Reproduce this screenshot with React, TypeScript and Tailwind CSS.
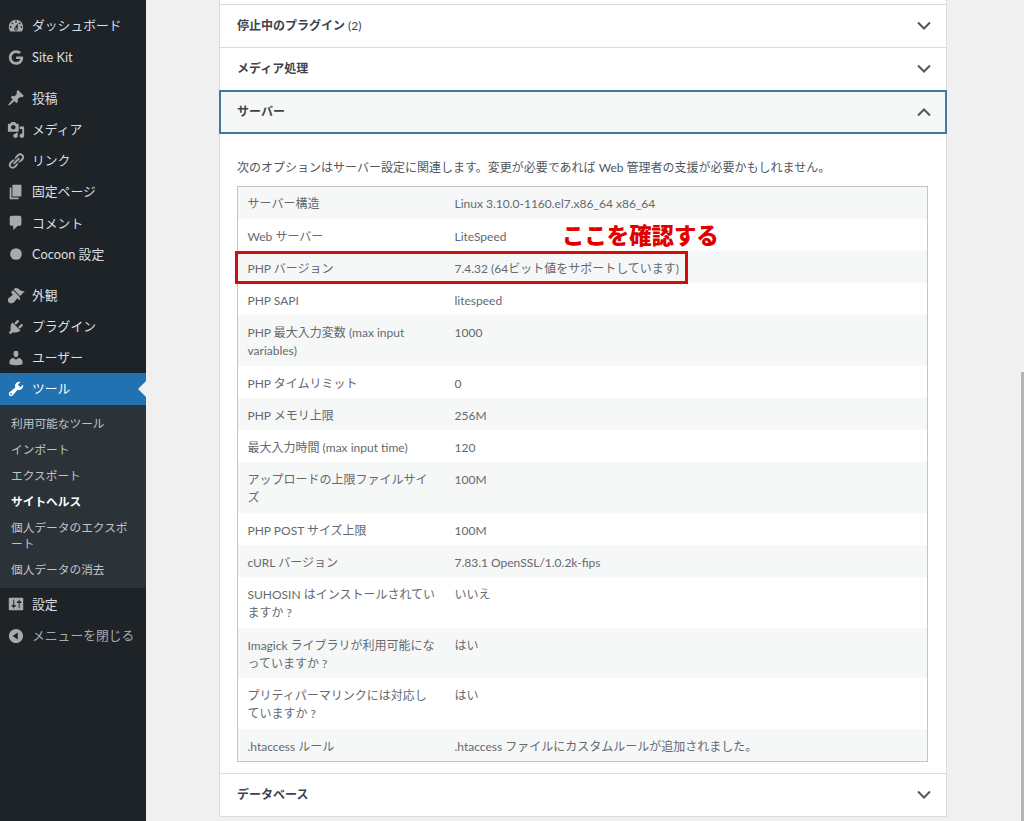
import { FaGoogle } from "react-icons/fa";

const dashicons: Record<string, string> = {
  dashboard:
    "M3.76 16h12.48c1.1-1.2 1.76-2.9 1.76-5 0-4.4-3.6-8-8-8s-8 3.6-8 8c0 2.1.66 3.8 1.76 5zM10 4c.55 0 1 .45 1 1s-.45 1-1 1-1-.45-1-1 .45-1 1-1zM6 6c.55 0 1 .45 1 1s-.45 1-1 1-1-.45-1-1 .45-1 1-1zm8 0c.55 0 1 .45 1 1s-.45 1-1 1-1-.45-1-1 .45-1 1-1zm-5.37 5.55L12 7v6c0 1.1-.9 2-2 2s-2-.9-2-2c0-.57.24-1.08.63-1.45zM4 10c.55 0 1 .45 1 1s-.45 1-1 1-1-.45-1-1 .45-1 1-1zm12 0c.55 0 1 .45 1 1s-.45 1-1 1-1-.45-1-1 .45-1 1-1zm-5 3c0-.55-.45-1-1-1s-1 .45-1 1 .45 1 1 1 1-.45 1-1z",
  pin: "M10.44 3.02l1.82-1.82 6.36 6.35-1.83 1.82c-1.05-.68-2.48-.57-3.41.36l-.75.75c-.92.93-1.04 2.35-.35 3.41l-1.83 1.82-2.41-2.41-2.8 2.79c-.42.42-3.38 2.71-3.8 2.29s1.86-3.39 2.28-3.81l2.79-2.79L4.1 9.36l1.83-1.82c1.05.69 2.48.57 3.4-.36l.75-.75c.93-.92 1.05-2.35.36-3.41z",
  media:
    "M13 11V4c0-.55-.45-1-1-1h-1.67L9 1H5L3.67 3H2c-.55 0-1 .45-1 1v7c0 .55.45 1 1 1h10c.55 0 1-.45 1-1zM7 4.5c1.38 0 2.5 1.12 2.5 2.5S8.38 9.5 7 9.5 4.5 8.38 4.5 7 5.62 4.5 7 4.5zM14 6h5v10.5c0 1.38-1.12 2.5-2.5 2.5S14 17.88 14 16.5s1.12-2.5 2.5-2.5c.17 0 .34.02.5.05V9h-3V6zm-4 8.05V13h2v3.5c0 1.38-1.12 2.5-2.5 2.5S7 17.88 7 16.5 8.12 14 9.5 14c.17 0 .34.02.5.05z",
  link: "M17.74 2.76c1.68 1.69 1.68 4.41 0 6.1l-1.53 1.52c-1.12 1.12-2.7 1.47-4.14 1.09l2.62-2.61.76-.77.76-.76c.84-.84.84-2.2 0-3.04-.84-.85-2.2-.85-3.04 0l-.77.76-3.38 3.38c-.37-1.44-.02-3.02 1.1-4.14l1.52-1.53c1.69-1.68 4.42-1.68 6.1 0zM8.59 13.43l5.34-5.34c.42-.42.42-1.1 0-1.52-.44-.43-1.13-.39-1.53 0l-5.33 5.34c-.42.42-.42 1.1 0 1.52.44.43 1.13.39 1.52 0zm-.76 2.29l4.14-4.15c.38 1.44.03 3.02-1.09 4.14l-1.52 1.53c-1.69 1.68-4.41 1.68-6.1 0-1.68-1.68-1.68-4.42 0-6.1l1.53-1.52c1.12-1.12 2.7-1.47 4.14-1.1l-4.14 4.15c-.85.84-.85 2.2 0 3.05.84.84 2.2.84 3.04 0z",
  page: "M6 15V2h10v13H6zm-1 1h8v2H3V5h2v11z",
  comment: "M5 2h9c1.1 0 2 .9 2 2v7c0 1.1-.9 2-2 2h-2l-5 5v-5H5c-1.1 0-2-.9-2-2V4c0-1.1.9-2 2-2z",
  brush:
    "M14.48 11.06L7.41 3.99l1.5-1.5c.5-.56 2.3-.47 3.51.32 1.21.8 1.43 1.28 2.91 2.1 1.18.64 2.45 1.26 4.45.85zm-.71.71L6.7 4.7 4.93 6.47c-.39.39-.39 1.02 0 1.41l1.06 1.06c.39.39.39 1.03 0 1.42-.6.6-1.43 1.11-2.21 1.69-.35.26-.7.53-1.01.84C1.43 13.23 1 14.8 1 15.71s.35 1.81 1.05 2.5c.7.7 1.59 1.05 2.5 1.05s2.48-.43 3.8-1.76c.31-.31.58-.66.85-1.02.57-.78 1.08-1.6 1.69-2.21.39-.39 1.02-.39 1.41 0l1.06 1.06c.39.39 1.02.39 1.41 0z",
  plugin:
    "M13.11 4.36L9.87 7.6 8 5.73l3.24-3.24c.35-.34 1.05-.2 1.56.32.52.51.66 1.21.31 1.55zm-8 1.77l.91-1.12 9.01 9.01-1.19.84c-.71.71-2.63 1.16-3.82 1.16H6.14L4.9 17.26c-.59.59-1.54.59-2.12 0-.59-.58-.59-1.53 0-2.12l1.24-1.24v-3.88c0-1.13.4-3.19 1.09-3.89zm7.26 3.97l3.24-3.24c.34-.35 1.04-.21 1.55.31.52.51.66 1.21.31 1.55l-3.24 3.25z",
  user: "M10 9.25c-2.27 0-2.73-3.44-2.73-3.44C7 4.02 7.82 2 9.97 2c2.16 0 2.98 2.02 2.71 3.81 0 0-.41 3.44-2.68 3.44zm0 2.57L12.72 10c2.39 0 4.52 2.33 4.52 4.53v2.49s-3.65 1.13-7.24 1.13c-3.65 0-7.24-1.13-7.24-1.13v-2.49c0-2.25 1.94-4.48 4.47-4.48z",
  tools:
    "M16.68 9.77c-1.34 1.34-3.3 1.67-4.95.99l-5.41 6.52c-.99.99-2.59.99-3.58 0s-.99-2.59 0-3.57l6.52-5.42c-.68-1.65-.35-3.61.99-4.95 1.28-1.28 3.12-1.62 4.72-1.06l-2.89 2.89 2.82 2.82 2.86-2.87c.53 1.58.18 3.39-1.08 4.65zM3.81 16.21c.4.39 1.04.39 1.43 0 .4-.4.4-1.04 0-1.43-.39-.4-1.03-.4-1.43 0-.39.39-.39 1.03 0 1.43z",
  settings:
    "M18 16V4c0-.55-.45-1-1-1H3c-.55 0-1 .45-1 1v12c0 .55.45 1 1 1h14c.55 0 1-.45 1-1zM8 11h1c.55 0 1 .45 1 1s-.45 1-1 1H8v1.5c0 .28-.22.5-.5.5s-.5-.22-.5-.5V13H6c-.55 0-1-.45-1-1s.45-1 1-1h1V5.5c0-.28.22-.5.5-.5s.5.22.5.5V11zm5-2h-1c-.55 0-1-.45-1-1s.45-1 1-1h1V5.5c0-.28.22-.5.5-.5s.5.22.5.5V7h1c.55 0 1 .45 1 1s-.45 1-1 1h-1v5.5c0 .28-.22.5-.5.5s-.5-.22-.5-.5V9z",
  collapse:
    "M10 2.16c4.33 0 7.84 3.51 7.84 7.84s-3.51 7.84-7.84 7.84S2.16 14.33 2.16 10 5.71 2.16 10 2.16zm2 11.72V6.12L6.18 9.97z",
  circle: "M10 3.5a6.5 6.5 0 1 0 0 13a6.5 6.5 0 1 0 0-13z",
};

const menuTop = [
  { icon: "dashboard", label: "ダッシュボード" },
  { icon: "google", label: "Site Kit" },
];
const menuContent = [
  { icon: "pin", label: "投稿" },
  { icon: "media", label: "メディア" },
  { icon: "link", label: "リンク" },
  { icon: "page", label: "固定ページ" },
  { icon: "comment", label: "コメント" },
  { icon: "circle", label: "Cocoon 設定" },
];
const menuAdmin = [
  { icon: "brush", label: "外観" },
  { icon: "plugin", label: "プラグイン" },
  { icon: "user", label: "ユーザー" },
];
const toolLinks = ["利用可能なツール", "インポート", "エクスポート", "サイトヘルス", "個人データのエクスポート", "個人データの消去"];

const serverRows = [
  ["サーバー構造", "Linux 3.10.0-1160.el7.x86_64 x86_64"],
  ["Web サーバー", "LiteSpeed"],
  ["PHP バージョン", "7.4.32 (64ビット値をサポートしています)"],
  ["PHP SAPI", "litespeed"],
  ["PHP 最大入力変数 (max input variables)", "1000"],
  ["PHP タイムリミット", "0"],
  ["PHP メモリ上限", "256M"],
  ["最大入力時間 (max input time)", "120"],
  ["アップロードの上限ファイルサイズ", "100M"],
  ["PHP POST サイズ上限", "100M"],
  ["cURL バージョン", "7.83.1 OpenSSL/1.0.2k-fips"],
  ["SUHOSIN はインストールされていますか ?", "いいえ"],
  ["Imagick ライブラリが利用可能になっていますか ?", "はい"],
  ["プリティパーマリンクには対応していますか ?", "はい"],
  [".htaccess ルール", ".htaccess ファイルにカスタムルールが追加されました。"],
];

function MenuIcon({ name }: { name: string }) {
  if (name === "google") return <FaGoogle className="h-[15px] w-[18px]" />;
  return (
    <svg viewBox="0 0 20 20" className="h-[18px] w-[18px]" fill="currentColor" fillRule="evenodd">
      <path d={dashicons[name]} />
    </svg>
  );
}

function MenuRow({ icon, label }: { icon: string; label: string }) {
  return (
    <div className="flex h-[31.2px] items-center gap-[7px] pl-[7px] text-[12.8px] text-[#dcdfe1]">
      <span className="text-[#a7aaad]">
        <MenuIcon name={icon} />
      </span>
      <span>{label}</span>
    </div>
  );
}

function Chevron({ up = false }: { up?: boolean }) {
  return (
    <svg viewBox="0 0 16 10" className="h-[10px] w-[16px] text-[#50575e]" fill="none" stroke="currentColor" strokeWidth="2">
      <path d={up ? "M2 8.5l6-6 6 6" : "M2 1.5l6 6 6-6"} />
    </svg>
  );
}

function AccordionHead({ title, count }: { title: string; count?: string }) {
  return (
    <div className="flex h-[43px] items-center justify-between border-b border-[#dcdcde] bg-white pl-[17px] pr-[14px]">
      <span className="text-[12px] font-bold text-[#3c434a]">
        {title}
        {count ? <span className="font-normal"> {count}</span> : null}
      </span>
      <Chevron />
    </div>
  );
}

export default function App() {
  return (
    <div className="relative flex h-[821px] w-[1024px] overflow-hidden bg-[#f0f0f1] font-['Lato','Noto_Sans_CJK_JP',sans-serif]">
      <aside className="w-[146px] shrink-0 bg-[#1d2327] pt-[10.4px]">
        {menuTop.map((m) => (
          <MenuRow key={m.label} {...m} />
        ))}
        <div className="h-[10px]" />
        {menuContent.map((m) => (
          <MenuRow key={m.label} {...m} />
        ))}
        <div className="h-[10px]" />
        {menuAdmin.map((m) => (
          <MenuRow key={m.label} {...m} />
        ))}
        <div className="relative flex h-[31.2px] items-center gap-[7px] bg-[#2271b1] pl-[7px] text-[12.8px] text-white">
          <MenuIcon name="tools" />
          <span>ツール</span>
          <span className="absolute right-0 top-1/2 h-0 w-0 -translate-y-1/2 border-y-[8px] border-r-[8px] border-y-transparent border-r-[#f0f0f1]" />
        </div>
        <div className="bg-[#2c3338] pb-[6px] pt-[5.6px] text-[11.7px] leading-[16px] text-[#c3c4c7]">
          {toolLinks.map((t) => (
            <div key={t} className={t === "サイトヘルス" ? "py-[5px] pl-[11px] pr-[12px] font-bold text-white" : "py-[5px] pl-[11px] pr-[12px]"}>
              {t}
            </div>
          ))}
        </div>
        <div className="pt-[0.6px]">
          <MenuRow icon="settings" label="設定" />
          <div className="flex h-[31.2px] items-center gap-[7px] pl-[7px] text-[12.8px] text-[#a7aaad]">
            <MenuIcon name="collapse" />
            <span>メニューを閉じる</span>
          </div>
        </div>
      </aside>

      <main className="ml-[73px] w-[727.5px] shrink-0">
        <div className="border-x border-[#dcdcde]">
          <div className="h-[5px] border-b border-[#dcdcde] bg-white" />
          <AccordionHead title="停止中のプラグイン" count="(2)" />
          <AccordionHead title="メディア処理" />
          <div className="relative z-10 flex h-[42px] items-center justify-between bg-[#f6f7f7] pl-[17px] pr-[14px] outline-2 -outline-offset-1 outline-[#3f7aa3]">
            <span className="text-[12px] font-bold text-[#3c434a]">サーバー</span>
            <Chevron up />
          </div>
          <div className="border-b border-[#dcdcde] bg-white pb-[11px] pl-[17px] pr-[17.5px] pt-[24.5px]">
            <p className="mb-[9px] text-[12px] leading-[19px] text-[#50575e]">
              次のオプションはサーバー設定に関連します。変更が必要であれば Web 管理者の支援が必要かもしれません。
            </p>
            <div className="border border-[#c3c4c7] text-[12px] leading-[18.3px] text-[#646970]">
              {serverRows.map((row, i) => (
                <div key={row[0]} className={i % 2 === 0 ? "flex bg-[#f6f7f7] pb-[5px] pt-[8.9px]" : "flex bg-white pb-[5px] pt-[8.9px]"}>
                  <div className="w-[207px] shrink-0 pl-[9.5px] pr-[7px]">{row[0]}</div>
                  <div className="pl-[9.5px]">{row[1]}</div>
                </div>
              ))}
            </div>
          </div>
          <AccordionHead title="データベース" />
        </div>
      </main>

      {/* annotation drawn on top of the screenshot */}
      <div className="absolute left-[235px] top-[251px] h-[33px] w-[453px] border-[3px] border-[#d40c0c]" />
      <span className="absolute left-[562px] top-[220px] text-[22.4px] font-black leading-[32px] text-[#e00000]">ここを確認する</span>

      {/* scrollbar thumb */}
      <div className="absolute right-0 top-[372px] h-[449px] w-[3px] bg-[#b4b4b4]" />
    </div>
  );
}
